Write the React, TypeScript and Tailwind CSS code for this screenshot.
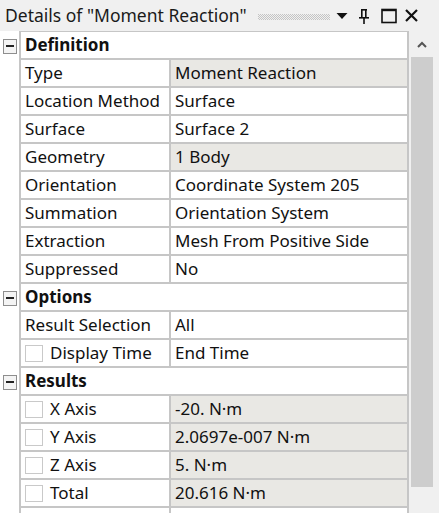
import React from "react";

type Row =
  | { kind: "section"; label: string }
  | { kind: "prop"; name: string; value: string; readonly?: boolean; check?: boolean };

const ROWS: Row[] = [
  { kind: "section", label: "Definition" },
  { kind: "prop", name: "Type", value: "Moment Reaction", readonly: true },
  { kind: "prop", name: "Location Method", value: "Surface" },
  { kind: "prop", name: "Surface", value: "Surface 2" },
  { kind: "prop", name: "Geometry", value: "1 Body", readonly: true },
  { kind: "prop", name: "Orientation", value: "Coordinate System 205" },
  { kind: "prop", name: "Summation", value: "Orientation System" },
  { kind: "prop", name: "Extraction", value: "Mesh From Positive Side" },
  { kind: "prop", name: "Suppressed", value: "No" },
  { kind: "section", label: "Options" },
  { kind: "prop", name: "Result Selection", value: "All" },
  { kind: "prop", name: "Display Time", value: "End Time", check: true },
  { kind: "section", label: "Results" },
  { kind: "prop", name: "X Axis", value: "-20. N·m", readonly: true, check: true },
  { kind: "prop", name: "Y Axis", value: "2.0697e-007 N·m", readonly: true, check: true },
  { kind: "prop", name: "Z Axis", value: "5. N·m", readonly: true, check: true },
  { kind: "prop", name: "Total", value: "20.616 N·m", readonly: true, check: true },
  { kind: "prop", name: "", value: "" },
];

function MinusBox() {
  return (
    <div className="flex h-[15px] w-[14px] items-center justify-center border border-[#8e8e8e] bg-[#f4f4f4]">
      <div className="h-[2px] w-[8px] bg-[#222]" />
    </div>
  );
}

function CheckBox() {
  return <div className="h-[17px] w-[18px] shrink-0 border border-[#c9c9c9] bg-white" />;
}

function TitleBar() {
  return (
    <div className="flex h-[31px] items-center bg-[#f0f0f0] pl-[5px] text-[17.5px] text-[#1a1a1a]">
      <span className="w-[248px] shrink-0 whitespace-nowrap">Details of "Moment Reaction"</span>
      <svg width="72" height="6" className="ml-[5px] mt-[2px] shrink-0">
        <defs>
          <pattern id="grip" width="2" height="2" patternUnits="userSpaceOnUse">
            <rect x="0" y="0" width="1" height="1" fill="#c4c4c4" />
            <rect x="1" y="1" width="1" height="1" fill="#c4c4c4" />
          </pattern>
        </defs>
        <rect width="72" height="6" fill="url(#grip)" />
      </svg>
      <svg width="12" height="8" viewBox="0 0 12 8" className="ml-[6px] mt-[1px] shrink-0">
        <path d="M0.5 1 L11.5 1 L6 7 Z" fill="#111" />
      </svg>
      <svg width="12" height="18" viewBox="0 0 12 18" className="ml-[10px] shrink-0">
        <rect x="3" y="2" width="6" height="1.6" fill="#111" />
        <rect x="3" y="2" width="1.6" height="9" fill="#111" />
        <rect x="7" y="2" width="1.6" height="9" fill="#111" />
        <rect x="1" y="10" width="10" height="1.6" fill="#111" />
        <rect x="5.2" y="11" width="1.6" height="6" fill="#111" />
      </svg>
      <svg width="16" height="16" viewBox="0 0 16 16" className="ml-[11px] shrink-0">
        <rect x="1" y="1.5" width="14" height="13" fill="none" stroke="#111" strokeWidth="1.6" />
        <rect x="1" y="1" width="14" height="2.2" fill="#111" />
      </svg>
      <svg width="15" height="15" viewBox="0 0 15 15" className="ml-[7px] shrink-0">
        <path d="M2 2 L13 13 M13 2 L2 13" stroke="#111" strokeWidth="2.2" />
      </svg>
    </div>
  );
}

function GridRow({ row }: { row: Row }) {
  if (row.kind === "section") {
    return (
      <div className="flex h-[28px]">
        <div className="flex w-[19px] shrink-0 items-center justify-center bg-white">
          <MinusBox />
        </div>
        <div className="flex flex-1 items-center border-b-2 border-l-2 border-r-2 border-[#c6c6c6] bg-white pl-[4px] font-bold">
          {row.label}
        </div>
      </div>
    );
  }
  return (
    <div className="flex h-[28px]">
      <div className="w-[19px] shrink-0 bg-white" />
      <div className="flex w-[150px] shrink-0 items-center gap-[7px] overflow-hidden border-b-2 border-l-2 border-[#c6c6c6] bg-white pl-[4px]">
        {row.check && <CheckBox />}
        <span className="whitespace-nowrap">{row.name}</span>
      </div>
      <div
        className={
          row.readonly
            ? "flex flex-1 items-center border-b-2 border-l-2 border-r-2 border-[#c6c6c6] bg-[#e9e8e4] pl-[4px]"
            : "flex flex-1 items-center border-b-2 border-l-2 border-r-2 border-[#c6c6c6] bg-white pl-[4px]"
        }
      >
        <span className="whitespace-nowrap">{row.value}</span>
      </div>
    </div>
  );
}

function ScrollBar() {
  return (
    <div className="flex w-[30px] shrink-0 flex-col bg-[#f0f0f0] pr-[6px] pl-[2px]">
      <div className="flex h-[26px] items-center justify-center">
        <svg width="10" height="7" viewBox="0 0 10 7">
          <path d="M1 6 L5 2 L9 6" fill="none" stroke="#555" strokeWidth="2" />
        </svg>
      </div>
      <div className="h-[430px] bg-[#cdcdcd]" />
    </div>
  );
}

export default function App() {
  return (
    <div
      className="h-[513px] w-[439px] overflow-hidden bg-white text-[17px] text-[#111]"
      style={{ fontFamily: "'Noto Sans', 'Open Sans', sans-serif" }}
    >
      <TitleBar />
      <div className="flex">
        <div className="flex flex-1 flex-col">
          <div className="flex h-[1px]">
            <div className="w-[19px] bg-white" />
            <div className="flex-1 bg-[#c6c6c6]" />
          </div>
          {ROWS.map((r, i) => (
            <GridRow key={i} row={r} />
          ))}
        </div>
        <ScrollBar />
      </div>
    </div>
  );
}
